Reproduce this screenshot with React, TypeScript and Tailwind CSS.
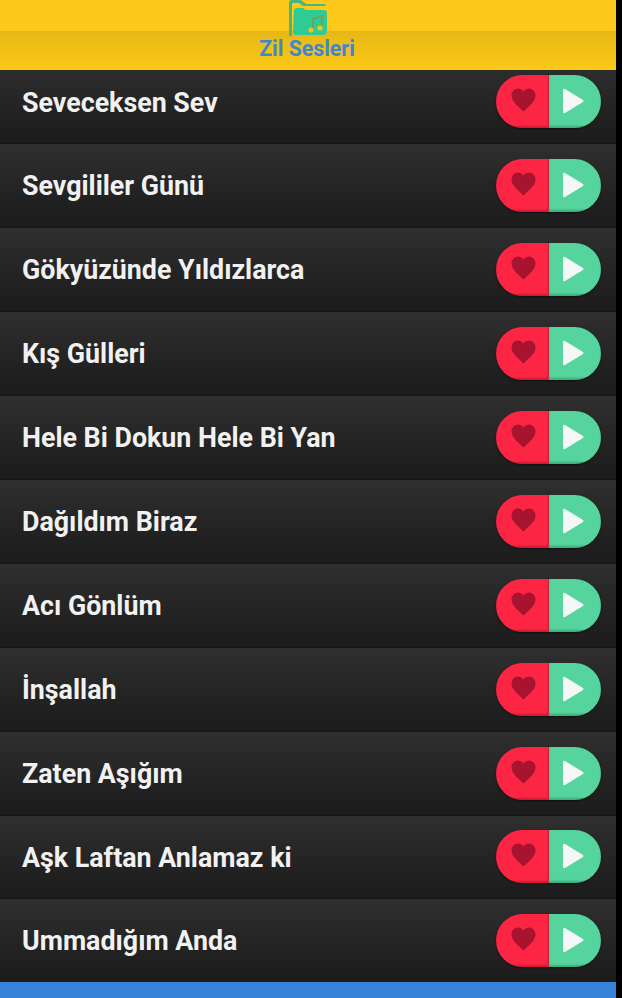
const songs = [
  'Seveceksen Sev',
  'Sevgililer Günü',
  'Gökyüzünde Yıldızlarca',
  'Kış Gülleri',
  'Hele Bi Dokun Hele Bi Yan',
  'Dağıldım Biraz',
  'Acı Gönlüm',
  'İnşallah',
  'Zaten Aşığım',
  'Aşk Laftan Anlamaz ki',
  'Ummadığım Anda',
];

const FolderIcon = () => (
  <svg width="42" height="36" viewBox="0 0 42 36" className="block">
    <path d="M3 36 V3 Q3 0 6 0 H15 L20 4 H38 Q40 4 40 6 H17 L13 3 H7 Q6 3 6 5 V36 Z" fill="#45b787" />
    <path d="M8 11 Q8 8 11 8 H17 L20 10 H38 Q41 10 41 13 V31 Q41 35 37 35 H10 Q7 35 7 32 Z" fill="#2ecb95" />
    <path d="M27 29 V19 L36 16 V27" fill="none" stroke="#7d9a45" strokeWidth="1.6" />
    <circle cx="25" cy="30" r="2.6" fill="#f0c41f" />
    <circle cx="34" cy="28" r="2.6" fill="#f0c41f" />
  </svg>
);

const Pill = () => (
  <div className="flex h-[53px] w-[105px] shrink-0 overflow-hidden rounded-full shadow-[0_1px_2px_rgba(0,0,0,0.5)]">
    <div className="flex w-[53px] items-center justify-center border-r border-[#c9243a] bg-[#fc2644] pb-[3px] pl-[3px] shadow-[inset_0_-2px_2px_rgba(150,10,40,0.45)]">
      <svg width="27" height="24" viewBox="0 0 28 26">
        <path
          d="M14 25.5 C10 21 1 15.5 1 8 C1 3.5 4.5 0.5 8 0.5 C10.5 0.5 12.8 1.8 14 4 C15.2 1.8 17.5 0.5 20 0.5 C23.5 0.5 27 3.5 27 8 C27 15.5 18 21 14 25.5 Z"
          fill="#a8142f"
        />
      </svg>
    </div>
    <div className="flex flex-1 items-center justify-center bg-[#55d49e] pr-[4px] pb-[1px] shadow-[inset_0_-2px_2px_rgba(20,120,80,0.4)]">
      <svg width="22" height="26" viewBox="0 0 22 26">
        <path d="M1 2 Q1 0 3 1 L21 12 Q22 13 21 14 L3 25 Q1 26 1 24 Z" fill="#f5f7f6" />
      </svg>
    </div>
  </div>
);

export default function App() {
  return (
    <div className="h-[998px] w-[622px] overflow-hidden bg-black font-['Roboto',sans-serif]">
      <div className="flex h-full w-[616px] flex-col">
        <header className="relative z-10 h-[70px] shrink-0 bg-[#fec91b]">
          <div className="h-[31px] bg-[#fec91b]" />
          <div className="h-[39px] bg-gradient-to-b from-[#e6b716] to-[#fcc918]" />
          <div className="absolute inset-x-0 top-0 flex flex-col items-center">
            <div className="mr-[3px]">
              <FolderIcon />
            </div>
            <span className="mt-[1px] mr-[2px] text-[21.3px] leading-[24px] font-bold text-[#3f87cb]">Zil Sesleri</span>
          </div>
        </header>
        <main className="flex-1 overflow-hidden">
          <div className="-mt-[9.5px]">
            {songs.map((song) => (
              <div
                key={song}
                className="flex h-[83.9px] items-center justify-between border-b border-[#161616] bg-gradient-to-b from-[#2f2f2f] to-[#1b1b1b] pr-[15px] pl-[22px]"
              >
                <span className="pt-[2px] text-[26.8px] leading-none font-bold text-[#f1f1f1]">{song}</span>
                <Pill />
              </div>
            ))}
          </div>
        </main>
        <footer className="h-[16px] shrink-0 bg-[#3584d9]" />
      </div>
    </div>
  );
}
